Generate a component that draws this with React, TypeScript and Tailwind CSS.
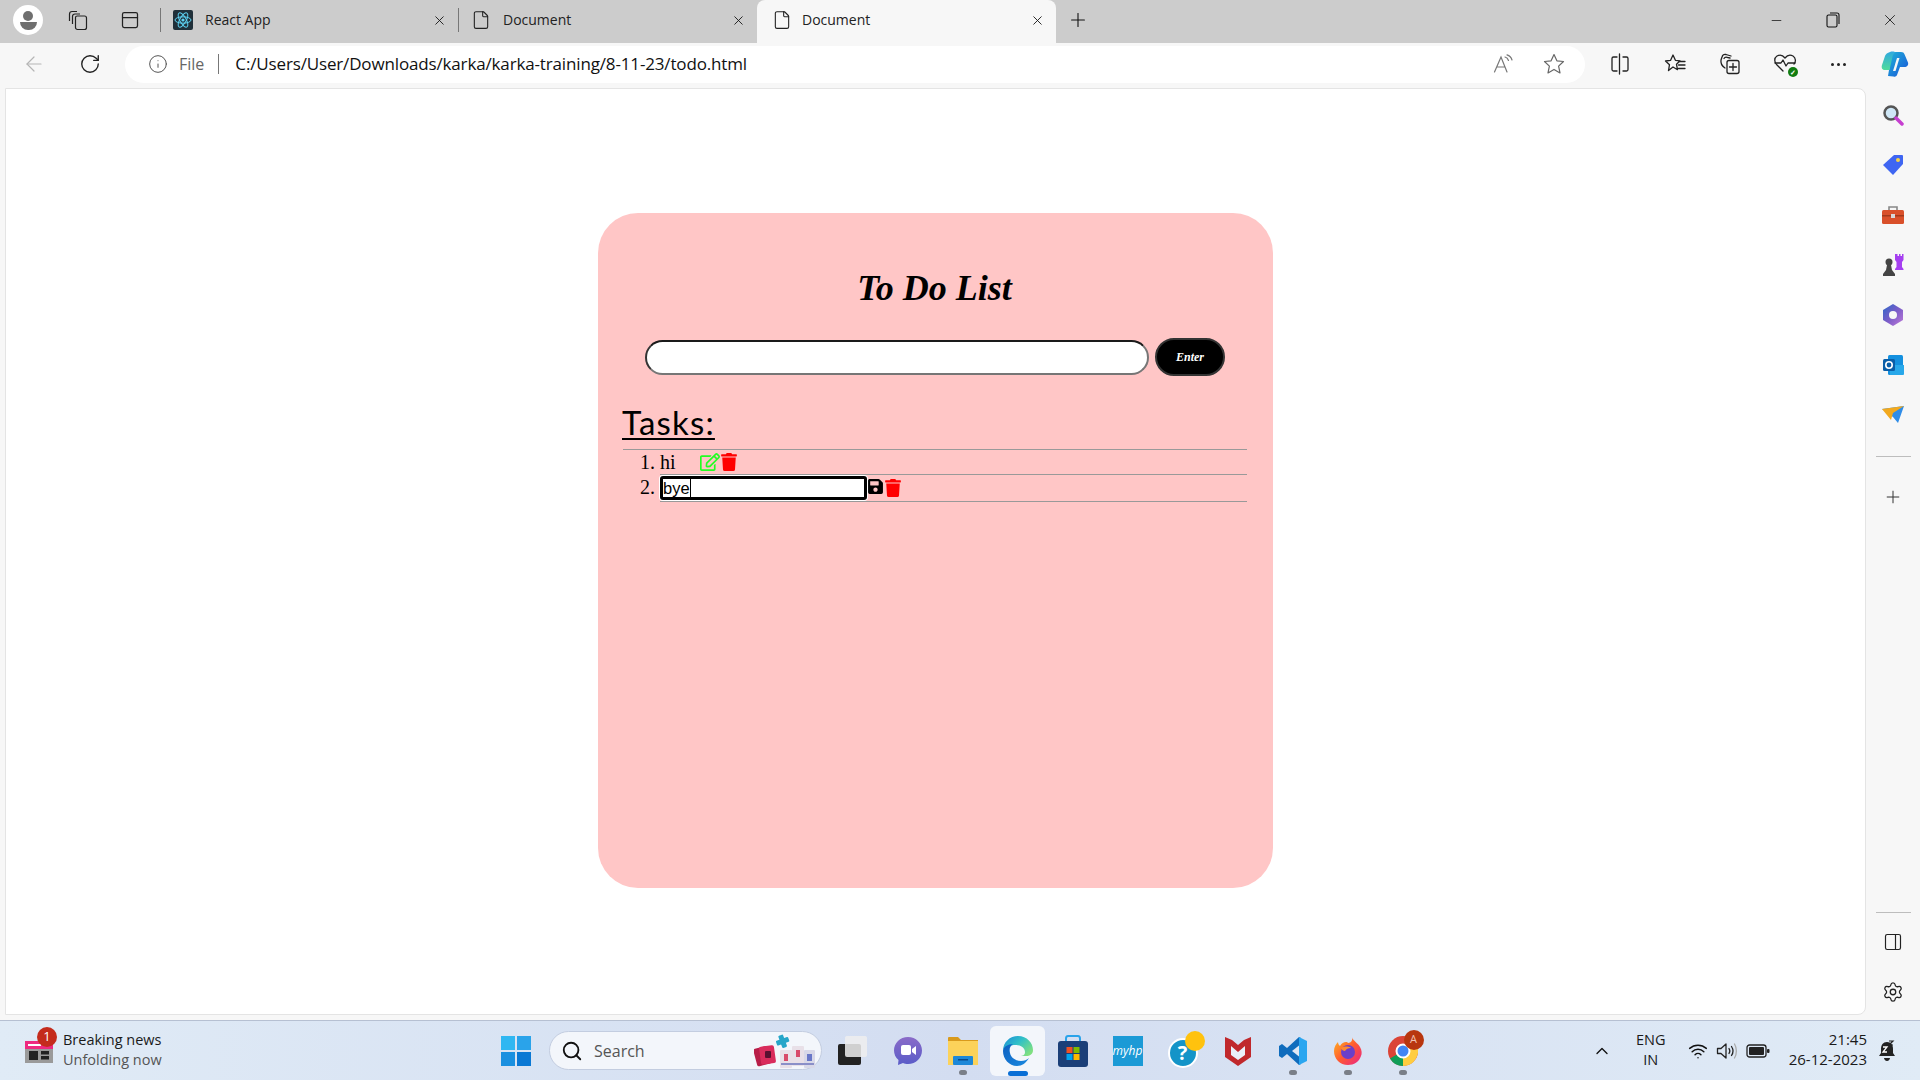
import React from "react";
import { ArrowLeft, RotateCw, Info, Plus, X, Minus, Search, ChevronUp, Wifi, Settings, PanelRight, File, PanelTop } from "lucide-react";
import { FaTrash, FaRegEdit, FaSave } from "react-icons/fa";

const ui = { fontFamily: '"Open Sans", "Noto Sans", sans-serif' };

function Tab({ w, icon, title, active }: { w: string; icon: React.ReactNode; title: string; active?: boolean }) {
  return (
    <div className={`${w} flex h-full items-center pb-[3px] ${active ? "rounded-t-lg bg-[#f7f7f7] pl-[15px] pr-[11px]" : "pl-[12px] pr-[11px]"}`}>
      <div className="flex w-[20px] justify-center">{icon}</div>
      <span className={`${active ? "ml-[10px]" : "ml-[12px]"} mb-[2px] flex-1 text-[14px] text-[#222]`}>{title}</span>
      <X size={15} strokeWidth={1.4} className="text-[#111]" />
    </div>
  );
}

function ReactIcon() {
  return (
    <svg width="20" height="20" viewBox="0 0 20 20">
      <rect width="20" height="20" rx="2" fill="#20303a" />
      <g fill="none" stroke="#5ed3f3" strokeWidth="1">
        <ellipse cx="10" cy="10" rx="8" ry="3.2" />
        <ellipse cx="10" cy="10" rx="8" ry="3.2" transform="rotate(60 10 10)" />
        <ellipse cx="10" cy="10" rx="8" ry="3.2" transform="rotate(120 10 10)" />
      </g>
      <circle cx="10" cy="10" r="1.6" fill="#5ed3f3" />
    </svg>
  );
}

function Workspaces() {
  return (
    <svg width="22" height="22" viewBox="0 0 22 22" fill="none" stroke="#222" strokeWidth="1.2" strokeLinejoin="round">
      <path d="M2.500 12V5c0-1.500 1-2.500 2.500-2.500h5" />
      <path d="M5.500 15V7.500c0-1.500 1-2.500 2.500-2.500h5" />
      <path d="M8.500 8.500c0-1 .8-1.500 1.700-1.500h7.300c1.200 0 2 .8 2 2v9.500c0 1.200-.8 2-2 2h-7c-1.200 0-2-.8-2-2z" />
    </svg>
  );
}

function ReadAloud() {
  return (
    <svg width="22" height="20" viewBox="0 0 22 20" fill="none" stroke="#777" strokeWidth="1.2" strokeLinecap="round">
      <path d="M1.500 18L8 3l6 15M4 13h8" />
      <path d="M12 3c2 .5 3 2 3.500 3.500M14 .8c2.500.7 4.300 2.700 5 5.200" />
    </svg>
  );
}

function StarOutline() {
  return (
    <svg width="22" height="22" viewBox="0 0 22 22" fill="none" stroke="#666" strokeWidth="1.2" strokeLinejoin="round">
      <path d="M11 1.500l2.900 6.300 6.600.7-4.900 4.600 1.400 6.800-6-3.500-6 3.500 1.400-6.800L1.500 8.500l6.600-.7z" />
    </svg>
  );
}

function SplitIcon() {
  return (
    <svg width="20" height="22" viewBox="0 0 20 22" fill="none" stroke="#222" strokeWidth="1.300" strokeLinecap="round">
      <path d="M7 4H3.500A1.500 1.500 0 0 0 2 5.500v11A1.500 1.500 0 0 0 3.500 18H7M13 4h3.500A1.500 1.500 0 0 1 18 5.500v11a1.500 1.500 0 0 1-1.500 1.500H13" />
      <path d="M9.500 1v20" />
    </svg>
  );
}

function FavIcon() {
  return (
    <svg width="22" height="22" viewBox="0 0 22 22" fill="none" stroke="#222" strokeWidth="1.300" strokeLinejoin="round" strokeLinecap="round">
      <path d="M9 2l2.400 5.300 4.600.5-3.500 3.500 1 5.400L9 14l-4.500 3.500 1-5.800L1.500 8l5-.6z" />
      <path d="M15 8.500h6M14.500 12h6.500M14.500 15.500h6.500" />
    </svg>
  );
}

function CollectionsIcon() {
  return (
    <svg width="22" height="24" viewBox="0 0 22 24" fill="none" stroke="#222" strokeWidth="1.300" strokeLinejoin="round" strokeLinecap="round">
      <path d="M6 16C3 14 1.500 11 2 8l1-3c.5-2 2-3 4-2.500L12 4" />
      <path d="M5 6.500c.5-1 1.500-1.500 3-1.200l3 .7" />
      <rect x="8" y="8.500" width="12" height="13" rx="2" />
      <path d="M14 11.500v7M10.500 15h7" />
    </svg>
  );
}

function HealthIcon() {
  return (
    <div className="relative h-[22px] w-[24px]">
      <svg width="24" height="22" viewBox="0 0 24 22" fill="none" stroke="#222" strokeWidth="1.300" strokeLinejoin="round" strokeLinecap="round">
        <path d="M10 18L4 12C1 9 1 5 4 3c3-1.500 6-.5 8 2 2-2.500 5-3.500 8-2 3 2 3 6 1 8" />
        <path d="M2 10h6l2-3 3 6 2-3h7" />
      </svg>
      <span className="absolute bottom-[-2px] right-[-1px] flex h-[10px] w-[10px] items-center justify-center rounded-full bg-[#107c10] text-[7px] font-bold leading-none text-white">✓</span>
    </div>
  );
}

function Copilot() {
  return (
    <svg width="30" height="30" viewBox="0 0 30 30">
      <defs>
        <linearGradient id="cp1" x1="0" y1="0" x2="1" y2="1"><stop offset="0" stopColor="#1fb4d8" /><stop offset="1" stopColor="#1a52d8" /></linearGradient>
        <linearGradient id="cp2" x1="0" y1="0" x2="0" y2="1"><stop offset="0" stopColor="#2fa8e0" /><stop offset="1" stopColor="#4fdc9a" /></linearGradient>
      </defs>
      <path d="M12 3h9c2 0 3 .8 3.600 2.500l3.400 8c.8 2.500-1 4.500-3.500 4.500H20l-3 8c-.7 1.600-2 2-3.500 1.500L8 27z" fill="url(#cp1)" />
      <path d="M10 3c3-1 4.500 0 6 .5-2 .5-3 2-3.500 4L9.500 21H5c-2.500 0-4-2-3-5l3-9c.7-2 2.500-3.300 5-4z" fill="url(#cp2)" />
      <path d="M17 9l-4 13h2.500l4-13z" fill="#f7f7f7" />
    </svg>
  );
}

function SideIcon({ children }: { children: React.ReactNode }) {
  return <div className="flex h-[50px] items-center justify-center">{children}</div>;
}

function Sidebar() {
  return (
    <aside className="flex w-[54px] flex-col items-center pt-[2px]">
      <SideIcon>
        <svg width="22" height="22" viewBox="0 0 22 22">
          <circle cx="9" cy="9" r="6.500" fill="#cfe7f6" stroke="#555" strokeWidth="2.500" />
          <path d="M14 14l6 6" stroke="#c63fd0" strokeWidth="3.500" strokeLinecap="round" />
        </svg>
      </SideIcon>
      <SideIcon>
        <svg width="22" height="22" viewBox="0 0 22 22">
          <path d="M12 1h8a1 1 0 0 1 1 1v8L11 21 1 11z" fill="#3f66f2" />
          <circle cx="16" cy="6" r="2" fill="#f6d24a" />
        </svg>
      </SideIcon>
      <SideIcon>
        <svg width="24" height="22" viewBox="0 0 24 22">
          <path d="M8 6V3h8v3" fill="none" stroke="#888" strokeWidth="1.600" />
          <rect x="1" y="6" width="22" height="14" rx="1.500" fill="#d9502a" />
          <rect x="1" y="11" width="22" height="1.500" fill="#a33a1c" />
          <rect x="10" y="10" width="4" height="4" fill="#d8d8d8" />
        </svg>
      </SideIcon>
      <SideIcon>
        <svg width="24" height="24" viewBox="0 0 24 24">
          <path d="M15 2h1.500v2H18V2h1.500v2H21V2h1.500v6l-1.500 2v5l1.500 2v1H14v-1l1.500-2v-5L14 8V2z" fill="#a53ff0" transform="translate(0 -1)" />
          <circle cx="8" cy="9" r="3.500" fill="#444" />
          <path d="M6 12h4l1 5 3 4v2H2v-2l3-4z" fill="#444" />
        </svg>
      </SideIcon>
      <SideIcon>
        <svg width="22" height="24" viewBox="0 0 22 24">
          <defs><linearGradient id="m3" x1="0" y1="0" x2="1" y2="1"><stop offset="0" stopColor="#2a68c8" /><stop offset=".5" stopColor="#7a5cc8" /><stop offset="1" stopColor="#c07ad8" /></linearGradient></defs>
          <path d="M11 1l10 6v10l-10 6L1 17V7z" fill="url(#m3)" />
          <circle cx="11" cy="12" r="4" fill="#f7f7f7" />
        </svg>
      </SideIcon>
      <SideIcon>
        <svg width="22" height="22" viewBox="0 0 22 22">
          <rect x="6" y="1" width="15" height="20" rx="1.500" fill="#1490df" />
          <path d="M8 11h14v9a1 1 0 0 1-1 1H8z" fill="#28a8ea" />
          <rect x="1" y="5" width="12" height="12" rx="1.500" fill="#0a5ea8" />
          <circle cx="7" cy="11" r="3.200" fill="none" stroke="#fff" strokeWidth="1.600" />
        </svg>
      </SideIcon>
      <SideIcon>
        <svg width="24" height="20" viewBox="0 0 24 20">
          <path d="M1 4l22-3-6 17-5-6z" fill="#2f8de8" />
          <path d="M1 4l22-3-11 7-2 7z" fill="#f2a91e" />
        </svg>
      </SideIcon>
      <div className="mt-[16px] h-px w-[35px] bg-[#bdbdbd]" />
      <div className="mt-[30px] flex items-center justify-center"><Plus size={20} strokeWidth={1.2} className="text-[#333]" /></div>
      <div className="flex-1" />
      <div className="h-px w-[35px] bg-[#bdbdbd]" />
      <div className="mt-[19px]"><PanelRight size={20} strokeWidth={1.4} className="text-[#222]" /></div>
      <div className="mb-[12px] mt-[29px]"><Settings size={22} strokeWidth={1.4} className="text-[#222]" /></div>
    </aside>
  );
}

function TodoCard() {
  return (
    <div className="h-[675px] w-[675px] rounded-[40px] bg-[#ffc6c6] pl-[24px] pr-[26px] pt-[53px] text-black">
      <h1 className="h-[44px] text-center text-[36px] font-bold italic leading-[44px]" style={{ fontFamily: '"Liberation Serif", serif' }}>To Do List</h1>
      <div className="mt-[28px] flex items-center pl-[23px]">
        <input readOnly className="h-[35px] w-[504px] rounded-[18px] border-2 border-b-[#767676] border-l-[#333] border-r-[#767676] border-t-[#1a1a1a] bg-white" />
        <button className="ml-[6px] h-[38px] w-[70px] rounded-[19px] border-2 border-[#333] bg-black text-[12px] font-bold italic text-white" style={{ fontFamily: '"Liberation Serif", serif' }}>Enter</button>
      </div>
      <h2 className="mt-[24px] h-[44px] text-[33px] leading-[44px] tracking-[1.2px] underline decoration-2 underline-offset-[3px]" style={{ fontFamily: 'Lato, sans-serif', fontWeight: 400 }}>Tasks:</h2>
      <div className="ml-px mt-[5px] h-px border-t border-t-[#999] border-b-0" />
      <ol className="list-decimal pl-[38px] text-[20px] leading-[24px]" style={{ fontFamily: '"Liberation Serif", serif' }}>
        <li className="h-[25px] border-b border-b-[#999]">
          <div className="flex h-[24px] items-center">
            <span className="w-[40px]">hi</span>
            <FaRegEdit className="text-[20px] text-[#22ff22]" />
            <FaTrash className="text-[18px] text-[#ff0000]" />
          </div>
        </li>
        <li className="h-[27px] border-b border-b-[#999]">
          <div className="flex h-[26px] items-center">
            <div className="flex h-[24px] w-[207px] items-center rounded-[3px] border-[3px] border-black bg-white text-[16.5px] leading-none shadow-[0_0_0_1px_#fff]" style={{ fontFamily: '"Liberation Sans", sans-serif' }}>
              <span>bye</span>
              <span className="h-[18px] w-px bg-black" />
            </div>
            <FaSave className="mb-[3px] text-[17px] text-black" />
            <FaTrash className="text-[18px] text-[#ff0000]" />
          </div>
        </li>
      </ol>
    </div>
  );
}

function TaskIcon({ children, active, dot }: { children: React.ReactNode; active?: boolean; dot?: boolean }) {
  return (
    <div className={`relative flex h-[50px] w-[55px] items-center justify-center ${active ? "rounded-md bg-[#f3f6fb]" : ""}`}>
      {children}
      {dot && <span className="absolute bottom-[1px] left-[24px] h-[5px] w-[8px] rounded-full bg-[#7a7f88]" />}
      {active && <span className="absolute bottom-0 left-[18px] h-[5px] w-[20px] rounded-full bg-[#0a6fd6]" />}
    </div>
  );
}

function Taskbar() {
  return (
    <footer className="flex h-[60px] items-center border-t border-t-[#b6c0d2] bg-gradient-to-r from-[#e0ebf6] via-[#d3ddf1] to-[#e0ebf6]" style={ui}>
      <div className="flex w-[501px] items-center pl-[25px]">
        <div className="relative h-[24px] w-[28px]">
          <svg width="28" height="24" viewBox="0 0 28 24">
            <rect y="2" width="28" height="8" fill="#ee2a80" />
            <rect y="10" width="28" height="14" fill="#9a9a9a" />
            <rect x="3" y="5" width="13" height="2" fill="#fff" />
            <rect x="4" y="12" width="9" height="9" fill="#222" />
            <rect x="16" y="12" width="8" height="3.500" fill="#222" />
            <rect x="16" y="17" width="8" height="3.500" fill="#222" />
          </svg>
          <span className="absolute left-[12px] top-[-12px] flex h-[20px] w-[20px] items-center justify-center rounded-full bg-[#c42b1c] text-[13px] text-white">1</span>
        </div>
        <div className="mb-[2px] ml-[10px] text-[14.5px] leading-[20px]">
          <div className="text-[#1a1a1a]">Breaking news</div>
          <div className="text-[#555]">Unfolding now</div>
        </div>
      </div>
      <svg width="30" height="30" viewBox="0 0 30 30">
        <rect width="14" height="14" fill="#2fb7f2" />
        <rect x="16" width="14" height="14" fill="#2aa3ea" />
        <rect y="16" width="14" height="14" fill="#1a90e0" />
        <rect x="16" y="16" width="14" height="14" fill="#0a78d4" />
      </svg>
      <div className="ml-[18px] flex h-[39px] w-[273px] items-center rounded-full border border-[#c3cde0] bg-[#f3f6fb] pl-[11px] pr-[5px]">
        <Search size={22} strokeWidth={2} className="text-[#111]" />
        <span className="ml-[11px] flex-1 text-[16px] text-[#555]">Search</span>
        <svg width="62" height="34" viewBox="0 0 62 34">
          <rect x="1" y="13" width="15" height="18" rx="2" fill="#b81e48" transform="rotate(-15 9 22)" />
          <rect x="6" y="12" width="15" height="18" rx="2" fill="#d92c5c" transform="rotate(-8 13 21)" />
          <rect x="11" y="17" width="6" height="7" rx="1" fill="#5a1030" />
          <rect x="26" y="1" width="5" height="13" rx="1" fill="#26a6c9" transform="rotate(-20 28 7)" />
          <rect x="22" y="5" width="13" height="5" rx="1" fill="#26a6c9" transform="rotate(-20 28 7)" />
          <rect x="26" y="16" width="12" height="18" rx="1" fill="#e8e0e8" />
          <rect x="38" y="12" width="12" height="20" rx="1" fill="#e8e0e8" />
          <rect x="50" y="16" width="11" height="18" rx="1" fill="#d8d8e8" />
          <rect x="30" y="20" width="4" height="7" fill="#d84a6a" />
          <rect x="42" y="16" width="4" height="7" fill="#d84a6a" />
          <rect x="53" y="20" width="5" height="7" fill="#6a78c8" />
          <rect x="27" y="29" width="33" height="2" fill="#8a8fc8" />
        </svg>
      </div>
      <div className="ml-[3px] flex items-center">
        <TaskIcon>
          <svg width="30" height="30" viewBox="0 0 30 30">
            <rect x="0" y="8" width="23" height="21" rx="2" fill="#222" />
            <rect x="7" y="0" width="22" height="21" rx="2" fill="#eeeeee" opacity=".85" />
          </svg>
        </TaskIcon>
        <TaskIcon>
          <svg width="30" height="30" viewBox="0 0 30 30">
            <defs><linearGradient id="mt" x1="0" y1="0" x2="0" y2="1"><stop offset="0" stopColor="#8a6bc8" /><stop offset="1" stopColor="#5a5cc8" /></linearGradient></defs>
            <path d="M15 1c8 0 14 6 14 13.500S23 28 15 28c-2 0-3.500-.3-5-1l-5 2 .5-5C2.500 21.500 1 18 1 14.500 1 7 7 1 15 1z" fill="url(#mt)" />
            <rect x="8" y="9" width="10" height="10" rx="2" fill="#fff" />
            <path d="M19 13l4-3v9l-4-3z" fill="#fff" />
          </svg>
        </TaskIcon>
        <TaskIcon dot>
          <svg width="32" height="30" viewBox="0 0 32 30">
            <path d="M1 2a1 1 0 0 1 1-1h9l3 3h17v4H1z" fill="#d99a1c" />
            <path d="M1 5h30v24H1z" fill="#fcd25a" />
            <rect x="6" y="20" width="20" height="9" rx="1" fill="#1e88d8" />
            <rect x="11" y="23" width="10" height="1.500" fill="#0a4a8a" />
          </svg>
        </TaskIcon>
        <TaskIcon active>
          <svg width="32" height="32" viewBox="0 0 32 32">
            <defs>
              <linearGradient id="ed" x1="0" y1="0" x2="1" y2=".7"><stop offset="0" stopColor="#1a8ad8" /><stop offset=".5" stopColor="#30c0c8" /><stop offset="1" stopColor="#7fe080" /></linearGradient>
              <linearGradient id="ed2" x1="0" y1="0" x2="1" y2="1"><stop offset="0" stopColor="#0d5fc0" /><stop offset="1" stopColor="#1a8ae0" /></linearGradient>
            </defs>
            <path d="M1 16C1 7 8 1 16 1c9 0 15 7 15 14 0 4-3 6-7 6h-6c3 0 5-1 5-4 0-4-4-7-9-7-6 0-13 2-13 6z" fill="url(#ed)" />
            <path d="M1 16c0-4 5-7 10-7-3 2-4 5-3 9 1 5 6 8 11 8 3 0 6-1 8-3-3 5-7 8-12 8-8 0-14-7-14-15z" fill="url(#ed2)" />
          </svg>
        </TaskIcon>
        <TaskIcon>
          <svg width="30" height="32" viewBox="0 0 30 32">
            <path d="M8 7V3.500C8 2 9 1 10 1h10c1 0 2 1 2 2.500V7" fill="none" stroke="#2aa3ea" strokeWidth="2" />
            <rect x="0" y="6" width="30" height="26" rx="3" fill="#1b3f78" />
            <rect x="8.500" y="12" width="6" height="6" fill="#f25022" />
            <rect x="15.500" y="12" width="6" height="6" fill="#7fba00" />
            <rect x="8.500" y="19" width="6" height="6" fill="#00a4ef" />
            <rect x="15.500" y="19" width="6" height="6" fill="#ffb900" />
          </svg>
        </TaskIcon>
        <TaskIcon><div className="flex h-[30px] w-[30px] items-center justify-center bg-[#1b9ad6] text-[12px] italic text-white">myhp</div></TaskIcon>
        <TaskIcon>
          <div className="relative h-[30px] w-[30px]">
            <div className="absolute left-0 top-[2px] flex h-[30px] w-[30px] items-center justify-center rounded-full border-2 border-white bg-[#1494c8] text-[20px] font-bold text-white">?</div>
            <span className="absolute left-[17px] top-[-5px] h-[20px] w-[20px] rounded-full bg-[#ffc20e]" />
          </div>
        </TaskIcon>
        <TaskIcon>
          <svg width="28" height="30" viewBox="0 0 28 30">
            <path d="M1 1l7 3 6 5 6-5 7-3v20l-13 9L1 21z" fill="#c0282c" />
            <path d="M7 10l7 6 7-6v9l-7 5-7-5z" fill="#eaf0f9" />
          </svg>
        </TaskIcon>
        <TaskIcon dot>
          <svg width="30" height="30" viewBox="0 0 30 30">
            <path d="M21 1L9 12 4 8 1 10v10l3 2 5-4 12 11 2-1V2z" fill="#0f6cbd" />
            <path d="M21 1l8 4v20l-8 4z" fill="#2aa6f0" />
            <path d="M21 9.500v11L14 15z" fill="#dfe7f4" />
          </svg>
        </TaskIcon>
        <TaskIcon dot>
          <svg width="30" height="30" viewBox="0 0 30 30">
            <defs><linearGradient id="ff" x1="0" y1="0" x2="1" y2="1"><stop offset="0" stopColor="#ffbb20" /><stop offset=".5" stopColor="#ff5a30" /><stop offset="1" stopColor="#e8248a" /></linearGradient></defs>
            <path d="M19 1c1 4 6 6 8 10 2 3 2 7 1 9-2 6-7 9-13 9C7 29 1 23 1 15 1 11 3 8 5 6c0 2 1 3 2 4 2-4 7-5 8-3 3 0 5-3 4-6z" fill="url(#ff)" />
            <circle cx="15" cy="16" r="7" fill="#6b3fc8" />
            <path d="M8 12c3-2 8-2 10 0-3 0-5 1-6 3-2 0-3-1-4-3z" fill="#ff8a30" />
          </svg>
        </TaskIcon>
        <TaskIcon dot>
          <div className="relative h-[30px] w-[30px]">
            <svg width="30" height="30" viewBox="0 0 30 30">
              <circle cx="15" cy="15" r="15" fill="#db4437" />
              <path d="M15 15L2 22.500A15 15 0 0 0 15 30z" fill="#0f9d58" />
              <path d="M15 15v15a15 15 0 0 0 13-22.500z" fill="#ffcd40" />
              <circle cx="15" cy="15" r="6.500" fill="#4285f4" stroke="#fff" strokeWidth="2" />
            </svg>
            <span className="absolute left-[16px] top-[-6px] flex h-[20px] w-[20px] items-center justify-center rounded-full bg-[#b8360f] text-[11px] text-[#f0c0b0]">A</span>
          </div>
        </TaskIcon>
      </div>
      <div className="flex-1" />
      <ChevronUp size={20} strokeWidth={1.6} className="text-[#111]" />
      <div className="mb-[1px] ml-[19px] w-[40px] text-center text-[14.5px] leading-[20px] text-[#1a1a1a]"><div>ENG</div><div>IN</div></div>
      <Wifi size={20} strokeWidth={1.8} className="ml-[17px] text-[#111]" />
      <svg className="ml-[8px]" width="22" height="18" viewBox="0 0 22 18" fill="none" stroke="#222" strokeWidth="1.300" strokeLinejoin="round" strokeLinecap="round">
        <path d="M1.500 6.500v5h3.500l5 4.500V2L5 6.500z" />
        <path d="M13 6.500c1 1.500 1 3.500 0 5M15.500 4.500c2 3 2 6 0 9" />
        <path d="M18.500 2c2.500 4 2.500 10 0 14" stroke="#aaa" />
      </svg>
      <svg className="ml-[8px]" width="24" height="16" viewBox="0 0 24 16">
        <rect x="1" y="2" width="19" height="12" rx="2.500" fill="none" stroke="#222" strokeWidth="1.300" />
        <rect x="3" y="4" width="15" height="8" rx="1" fill="#222" />
        <rect x="21" y="6" width="2.500" height="4" rx="1" fill="#222" />
      </svg>
      <div className="mb-[3px] ml-[19px] text-right text-[15px] leading-[20px] text-[#1a1a1a]"><div>21:45</div><div>26-12-2023</div></div>
      <svg className="ml-[11px] mr-[24px]" width="18" height="22" viewBox="0 0 18 22">
        <path d="M9 2c-4 0-6 3-6 7v4l-2 3h16l-2-3V9c0-4-2-7-6-7z" fill="#222" />
        <path d="M6 18h6c0 1.500-1.300 3-3 3s-3-1.500-3-3z" fill="#222" />
        <path d="M5 7h4l-4 5h4" fill="none" stroke="#fff" strokeWidth="1.300" />
        <path d="M11 1h4l-4 4h4" fill="none" stroke="#222" strokeWidth="1.200" />
      </svg>
    </footer>
  );
}

export default function App() {
  return (
    <div className="flex h-[1080px] w-[1920px] flex-col overflow-hidden bg-[#f7f7f7]" style={ui}>
      <header className="flex h-[43px] items-center bg-[#cccccc]">
        <div className="mb-[3px] ml-[13px] flex h-[30px] w-[30px] flex-col items-center justify-center rounded-full bg-white">
          <span className="h-[10px] w-[10px] rounded-full bg-[#6f6f6f]" />
          <span className="mt-[1px] h-[8px] w-[17px] rounded-b-full rounded-t-sm bg-[#6f6f6f]" />
        </div>
        <div className="mb-[3px] ml-[24px]"><Workspaces /></div>
        <PanelTop size={20} strokeWidth={1.5} className="mb-[3px] ml-[31px] text-[#222]" />
        <div className="mb-[3px] ml-[20px] h-[24px] w-px bg-[#777]" />
        <Tab w="w-[297px]" icon={<ReactIcon />} title="React App" />
        <div className="mb-[3px] h-[24px] w-px bg-[#777]" />
        <Tab w="w-[298px]" icon={<File size={20} strokeWidth={1.3} className="text-[#222]" />} title="Document" />
        <Tab w="w-[299px]" active icon={<File size={20} strokeWidth={1.3} className="text-[#222]" />} title="Document" />
        <Plus size={22} strokeWidth={1.2} className="mb-[3px] ml-[11px] text-[#111]" />
        <div className="flex-1" />
        <Minus size={15} strokeWidth={1.2} className="mb-[3px] text-[#111]" />
        <svg className="mb-[3px] ml-[42px]" width="14" height="16" viewBox="0 0 14 16" fill="none" stroke="#111" strokeWidth="1.100">
          <rect x="1" y="3" width="10" height="12" rx="1.500" />
          <path d="M4 1h7a2 2 0 0 1 2 2v9" />
        </svg>
        <X size={18} strokeWidth={1.1} className="mb-[3px] ml-[41px] mr-[21px] text-[#111]" />
      </header>
      <nav className="flex h-[45px] items-center">
        <ArrowLeft size={24} strokeWidth={1.2} className="mb-[3px] ml-[22px] text-[#b5b5b5]" />
        <RotateCw size={22} strokeWidth={1.5} className="mb-[3px] ml-[33px] text-[#222]" />
        <div className="mb-[3px] ml-[24px] flex h-[37px] w-[1460px] items-center rounded-full bg-white pl-[23px] pr-[20px]">
          <Info size={20} strokeWidth={1.2} className="mr-[11px] text-[#555]" />
          <span className="text-[16px] text-[#666]">File</span>
          <span className="ml-[14px] h-[20px] w-px bg-[#777]" />
          <span className="ml-[16px] flex-1 text-[17px] tracking-[-0.15px] text-[#111]">C:/Users/User/Downloads/karka/karka-training/8-11-23/todo.html</span>
          <ReadAloud />
          <div className="ml-[28px]"><StarOutline /></div>
        </div>
        <div className="mb-[3px] ml-[25px]"><SplitIcon /></div>
        <div className="mb-[3px] ml-[34px]"><FavIcon /></div>
        <div className="mb-[3px] ml-[33px]"><CollectionsIcon /></div>
        <div className="mb-[3px] ml-[32px]"><HealthIcon /></div>
        <div className="mb-[3px] ml-[34px] flex gap-[3px]">
          <span className="h-[3px] w-[3px] rounded-full bg-[#222]" />
          <span className="h-[3px] w-[3px] rounded-full bg-[#222]" />
          <span className="h-[3px] w-[3px] rounded-full bg-[#222]" />
        </div>
        <div className="mb-[3px] ml-[34px]"><Copilot /></div>
      </nav>
      <div className="flex h-[927px]">
        <main className="ml-[5px] flex w-[1861px] items-center justify-center rounded-r-lg border border-[#e4e4e4] bg-white pb-[2px]">
          <TodoCard />
        </main>
        <Sidebar />
      </div>
      <div className="h-[5px]" />
      <Taskbar />
    </div>
  );
}
